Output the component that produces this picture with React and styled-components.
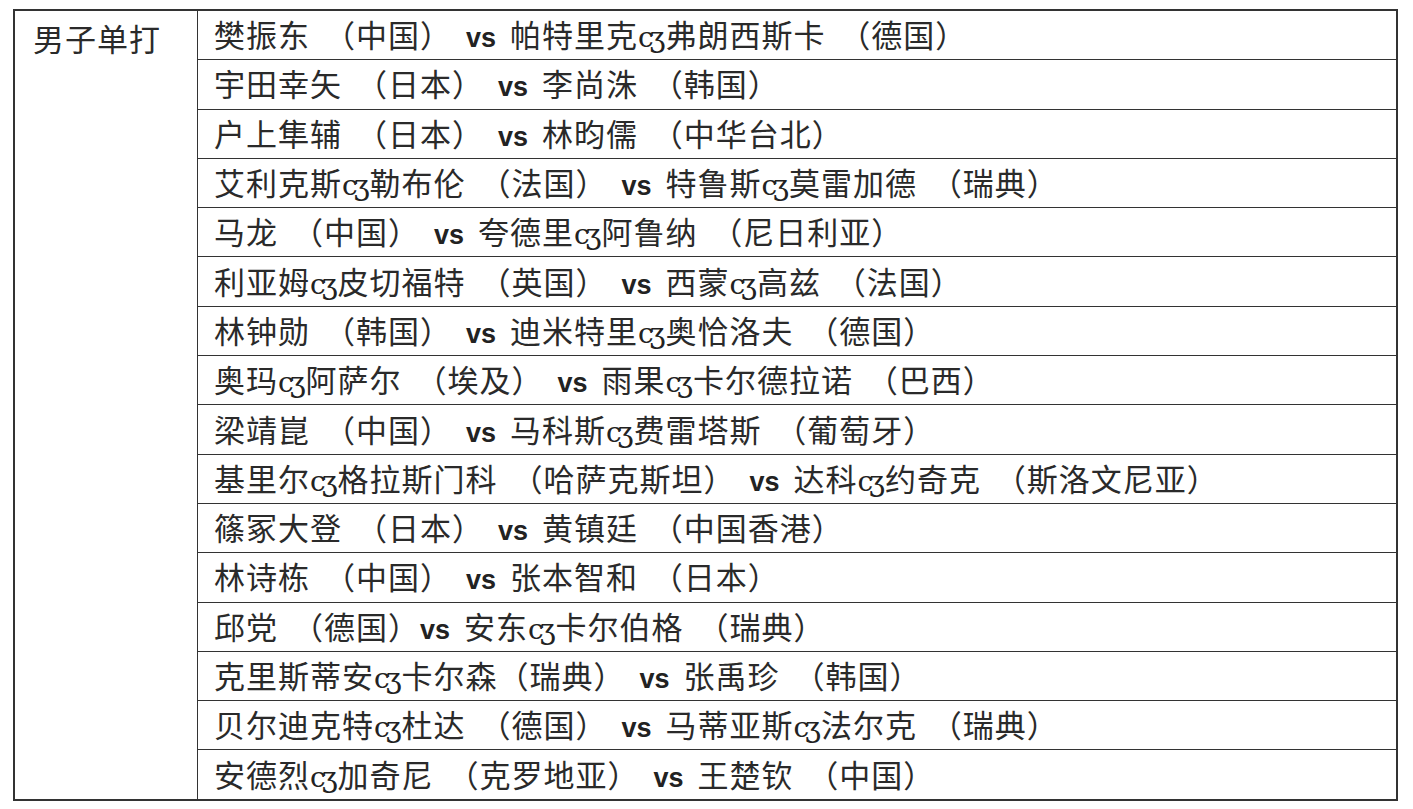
import React from "react";
import styled, { createGlobalStyle } from "styled-components";

const GlobalStyle = createGlobalStyle`
  html, body {
    margin: 0;
    padding: 0;
    background: #ffffff;
  }
`;

const matches = [
  "樊振东 （中国） vs 帕特里克·弗朗西斯卡 （德国）",
  "宇田幸矢 （日本） vs 李尚洙 （韩国）",
  "户上隼辅 （日本） vs 林昀儒 （中华台北）",
  "艾利克斯·勒布伦 （法国） vs 特鲁斯·莫雷加德 （瑞典）",
  "马龙 （中国） vs 夸德里·阿鲁纳 （尼日利亚）",
  "利亚姆·皮切福特 （英国） vs 西蒙·高兹 （法国）",
  "林钟勋 （韩国） vs 迪米特里·奥恰洛夫 （德国）",
  "奥玛·阿萨尔 （埃及） vs 雨果·卡尔德拉诺 （巴西）",
  "梁靖崑 （中国） vs 马科斯·费雷塔斯 （葡萄牙）",
  "基里尔·格拉斯门科 （哈萨克斯坦） vs 达科·约奇克 （斯洛文尼亚）",
  "篠冢大登 （日本） vs 黄镇廷 （中国香港）",
  "林诗栋 （中国） vs 张本智和 （日本）",
  "邱党 （德国）vs 安东·卡尔伯格 （瑞典）",
  "克里斯蒂安·卡尔森（瑞典） vs 张禹珍 （韩国）",
  "贝尔迪克特·杜达 （德国） vs 马蒂亚斯·法尔克 （瑞典）",
  "安德烈·加奇尼 （克罗地亚） vs 王楚钦 （中国）",
];

const Page = styled.div`
  padding: 9px 15px 0 13px;
`;

const Table = styled.table`
  width: 1385px;
  border-collapse: collapse;
  font-family: "Noto Sans CJK SC", "Noto Sans", sans-serif;
  font-size: 31px;
  color: #2a2a2a;
  border: 2px solid #333;
`;

const Cell = styled.td`
  border: 1.5px solid #333;
  padding: ${(p) => (p.$head ? "9px 0 0 18px" : "2px 0 0 16px")};
  vertical-align: ${(p) => (p.$head ? "top" : "middle")};
  width: ${(p) => (p.$head ? "164px" : "auto")};
  height: 46.3px;
  line-height: 36px;
  white-space: nowrap;
  letter-spacing: 1px;
  word-spacing: 6px;
`;

const Vs = styled.b`
  font-family: "Liberation Sans", Arial, sans-serif;
  font-size: 27px;
  font-weight: 700;
  letter-spacing: 0;
  color: #222;
`;

const Dot = styled.span`
  font-family: "DejaVu Serif", serif;
  font-size: 28px;
  letter-spacing: -4px;
  margin-right: 4px;
  color: #222;
`;

const renderName = (text, key) =>
  text.split("·").map((part, i, arr) => (
    <React.Fragment key={`${key}-${i}`}>
      {part}
      {i < arr.length - 1 && <Dot>cʒ</Dot>}
    </React.Fragment>
  ));

const Match = ({ text }) => {
  const parts = text.split("vs");
  return (
    <>
      {renderName(parts[0], "a")}
      <Vs>vs</Vs>
      {renderName(parts[1], "b")}
    </>
  );
};

const App = () => (
  <Page>
    <GlobalStyle />
    <Table>
      <tbody>
        {matches.map((m, i) => (
          <tr key={i}>
            {i === 0 && (
              <Cell $head rowSpan={matches.length}>
                男子单打
              </Cell>
            )}
            <Cell>
              <Match text={m} />
            </Cell>
          </tr>
        ))}
      </tbody>
    </Table>
  </Page>
);

export default App;
